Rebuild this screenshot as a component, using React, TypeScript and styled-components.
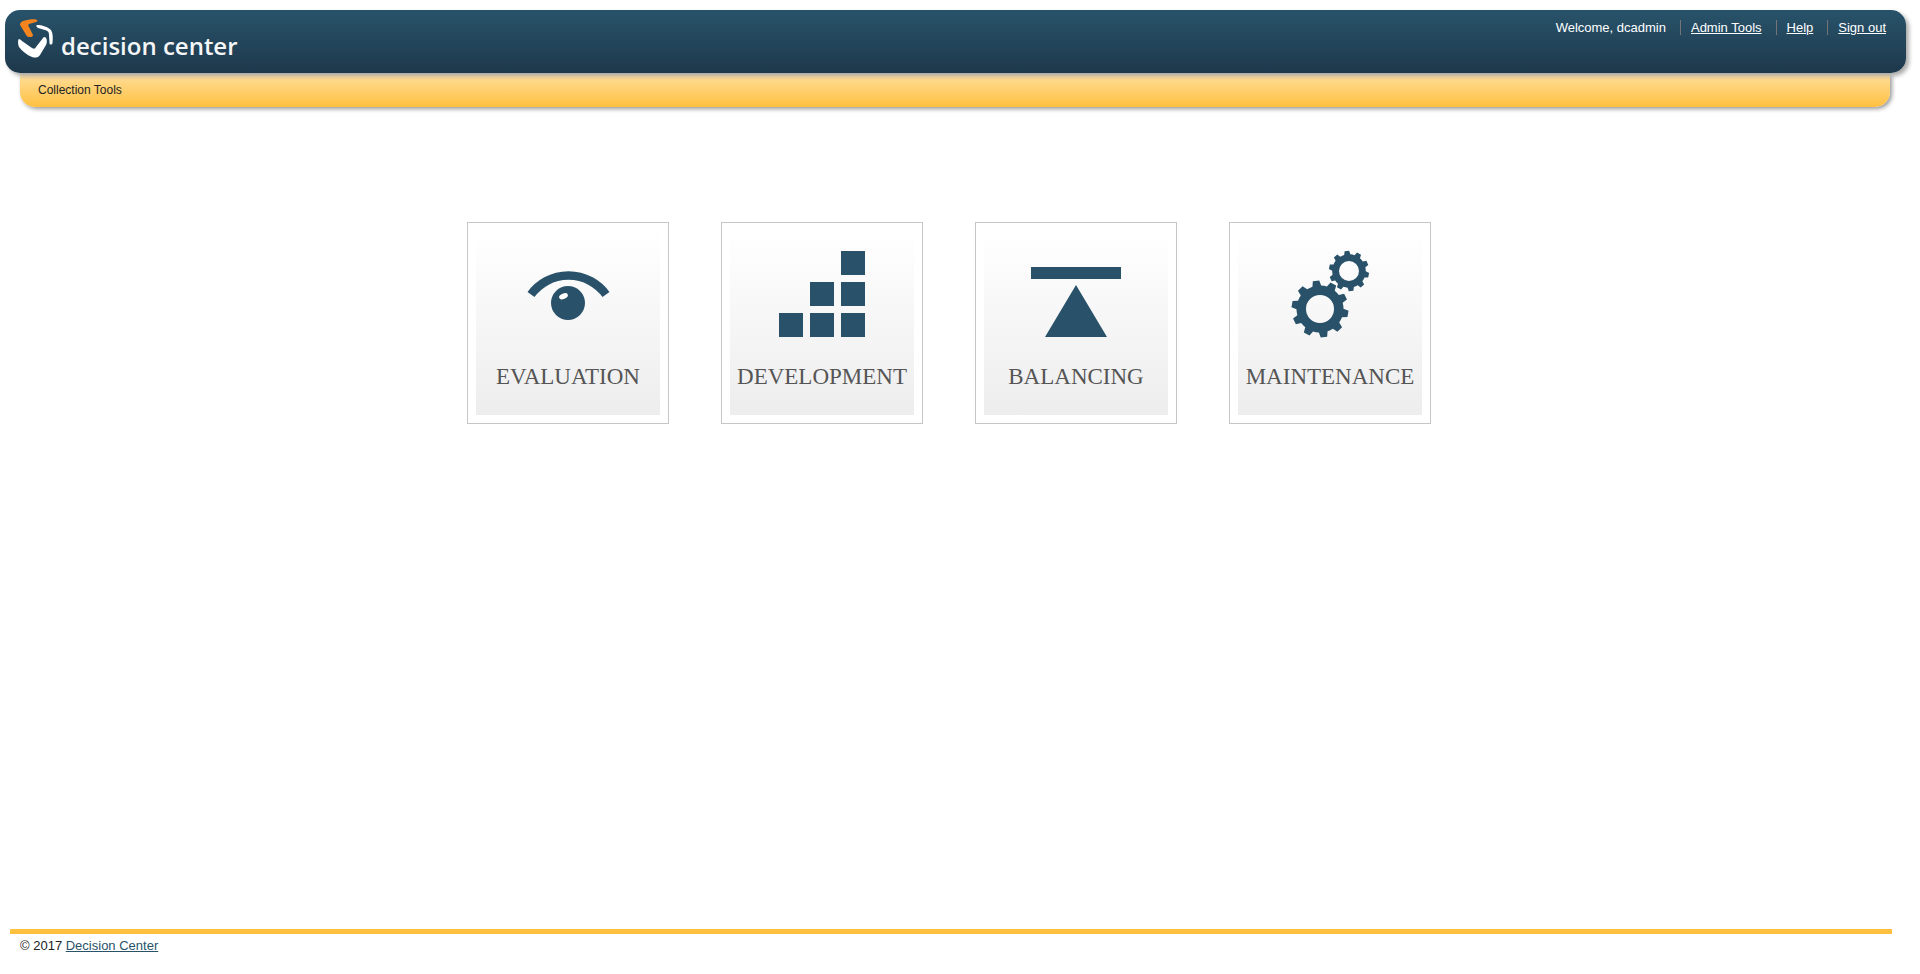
import React from "react";
import styled, { createGlobalStyle } from "styled-components";

const ink = "#29526a";

const GlobalStyle = createGlobalStyle`
  *, *::before, *::after { box-sizing: border-box; }
  body {
    margin: 0;
    background: #fff;
    color: #222;
    font-family: "Liberation Sans", Arial, Helvetica, sans-serif;
    font-size: 13px;
    line-height: 15px;
  }
`;

const Page = styled.div`
  display: flex;
  flex-direction: column;
  min-height: 100vh;
  padding-top: 10px;
`;

const Header = styled.header`
  position: relative;
  z-index: 1;
  display: flex;
  justify-content: space-between;
  align-items: flex-start;
  min-height: 63px;
  margin: 0 14px 0 5px;
  padding: 9px 20px 0 13px;
  border-radius: 15px;
  background: linear-gradient(#28536b, #1e384b);
  box-shadow: 3px 3px 4px #aaa;
  color: #fff;
`;

const Brand = styled.a`
  display: flex;
  gap: 7px;
  color: #f4f6f8;
  text-decoration: none;
`;

const BrandName = styled.span`
  padding-top: 11px;
  font-family: "Open Sans", "Noto Sans", sans-serif;
  font-size: 24px;
  font-weight: 600;
  line-height: 32px;
`;

const UserLinks = styled.ul`
  display: flex;
  gap: 14px;
  margin: 0;
  padding: 1px 0 0;
  list-style: none;
`;

const UserItem = styled.li`
  & + & {
    padding-left: 10px;
    border-left: 1px solid #747474;
  }
`;

const UserLink = styled.a`
  color: #fff;
`;

const NavBar = styled.nav`
  margin: 0 30px 0 20px;
  padding: 10px 18px 9px;
  border-radius: 0 0 15px 15px;
  background: linear-gradient(#ffdf9d, #ffc040);
  box-shadow: 2px 2px 4px #999;
  font-size: 12px;
`;

const NavLink = styled.a`
  color: #222;
  text-decoration: none;
`;

const Main = styled.main`
  display: flex;
  flex: 1;
  flex-wrap: wrap;
  justify-content: center;
  align-content: flex-start;
  gap: 52px;
  padding: 115px 31px 40px 9px;
`;

const Card = styled.a`
  width: 202px;
  padding: 8px;
  border: 1px solid #c6c6c6;
  background: #fff;
  color: #555;
  text-decoration: none;
`;

const CardFace = styled.span`
  display: flex;
  flex-direction: column;
  align-items: center;
  height: 184px;
  padding-top: 18px;
  background: linear-gradient(#fff, #ededed);
`;

const CardIcon = styled.svg`
  width: 100px;
  height: 90px;
  fill: ${ink};
`;

const CardLabel = styled.span`
  margin-top: 24px;
  font-family: "Liberation Serif", "Times New Roman", serif;
  font-size: 23px;
  line-height: 28px;
  white-space: nowrap;
`;

const Footer = styled.footer`
  min-height: 45px;
  margin: 0 28px 0 10px;
  padding: 4px 10px 0;
  border-top: 5px solid #ffc040;
`;

const FooterLink = styled.a`
  color: ${ink};
`;

function gearPath(
  cx: number,
  cy: number,
  outer: number,
  root: number,
  hole: number,
  teeth: number,
  start: number
) {
  const step = 360 / teeth;
  const point = (radius: number, degrees: number) => {
    const a = ((degrees - 90) * Math.PI) / 180;
    return `${(cx + radius * Math.cos(a)).toFixed(2)} ${(cy + radius * Math.sin(a)).toFixed(2)}`;
  };
  let d = "";
  for (let i = 0; i < teeth; i += 1) {
    const a = start + i * step;
    d += `${i ? "L" : "M"}${point(root, a - step * 0.3)}L${point(outer, a - step * 0.18)}`;
    d += `L${point(outer, a + step * 0.18)}L${point(root, a + step * 0.3)}`;
    d += `A${root} ${root} 0 0 1 ${point(root, a + step * 0.7)}`;
  }
  return `${d}ZM${cx - hole} ${cy}a${hole} ${hole} 0 1 0 ${hole * 2} 0a${hole} ${hole} 0 1 0 ${-hole * 2} 0Z`;
}

const tools = [
  {
    label: "EVALUATION",
    icon: (
      <>
        <path d="M13 45.500A46.500 46.500 0 0 1 88 45.500" fill="none" stroke={ink} strokeWidth="8.600" />
        <circle cx="50" cy="54" r="17" />
        <ellipse cx="45.500" cy="47.300" rx="4.600" ry="2.700" transform="rotate(-22 45.500 47.300)" fill="#fff" />
      </>
    ),
  },
  {
    label: "DEVELOPMENT",
    icon: (
      <path d="M69 2h24v24h-24zM38 33h24v24h-24zM69 33h24v24h-24zM7 64h24v24h-24zM38 64h24v24h-24zM69 64h24v24h-24z" />
    ),
  },
  {
    label: "BALANCING",
    icon: <path d="M5 18h90v12H5zM50 36L81 88H19z" />,
  },
  {
    label: "MAINTENANCE",
    icon: (
      <>
        <path fillRule="evenodd" d={gearPath(40, 60, 28.6, 23.5, 14, 10, -8)} />
        <path fillRule="evenodd" d={gearPath(69, 22, 20.2, 16.8, 10, 10, -6)} />
      </>
    ),
  },
];

export default function App() {
  return (
    <>
      <GlobalStyle />
      <Page>
        <Header>
          <Brand href="#">
            <svg width="36" height="40" viewBox="0 0 36 40" aria-hidden="true">
              <path
                d="M2 6C2 4 3 3 5 2C10 .5 15 0 18 .5C20 1 20 2 18 3L11 5C10 6 10 7 11 8L15 16C15 18 13 18 11 18C9 18 8 16 7 14Z"
                fill="#f5841f"
              />
              <path
                d="M19 6C24 6 30 8 33 11C35 14 35 19 34.5 24C34 26 31.5 26 31.5 24L31 16C31 13 30 12 27 11L20 9C18 8 18 6 19 6Z"
                fill="#fff"
              />
              <path
                d="M1 20C2 20 3 21 4 22L14 29C16 30 17 30 18 28L25 19C26 17 28 18 28.5 20C29 22 29 24 28 26L22 36C20 39 17 39 14 38C9 36 4 32 1 28C-.5 25 0 20 1 20Z"
                fill="#fff"
              />
            </svg>
            <BrandName>decision center</BrandName>
          </Brand>
          <UserLinks>
            <UserItem>Welcome, dcadmin</UserItem>
            <UserItem><UserLink href="#">Admin Tools</UserLink></UserItem>
            <UserItem><UserLink href="#">Help</UserLink></UserItem>
            <UserItem><UserLink href="#">Sign out</UserLink></UserItem>
          </UserLinks>
        </Header>
        <NavBar>
          <NavLink href="#">Collection Tools</NavLink>
        </NavBar>
        <Main>
          {tools.map((tool) => (
            <Card href="#" key={tool.label}>
              <CardFace>
                <CardIcon viewBox="0 0 100 90" aria-hidden="true">{tool.icon}</CardIcon>
                <CardLabel>{tool.label}</CardLabel>
              </CardFace>
            </Card>
          ))}
        </Main>
        <Footer>
          © 2017 <FooterLink href="#">Decision Center</FooterLink>
        </Footer>
      </Page>
    </>
  );
}
